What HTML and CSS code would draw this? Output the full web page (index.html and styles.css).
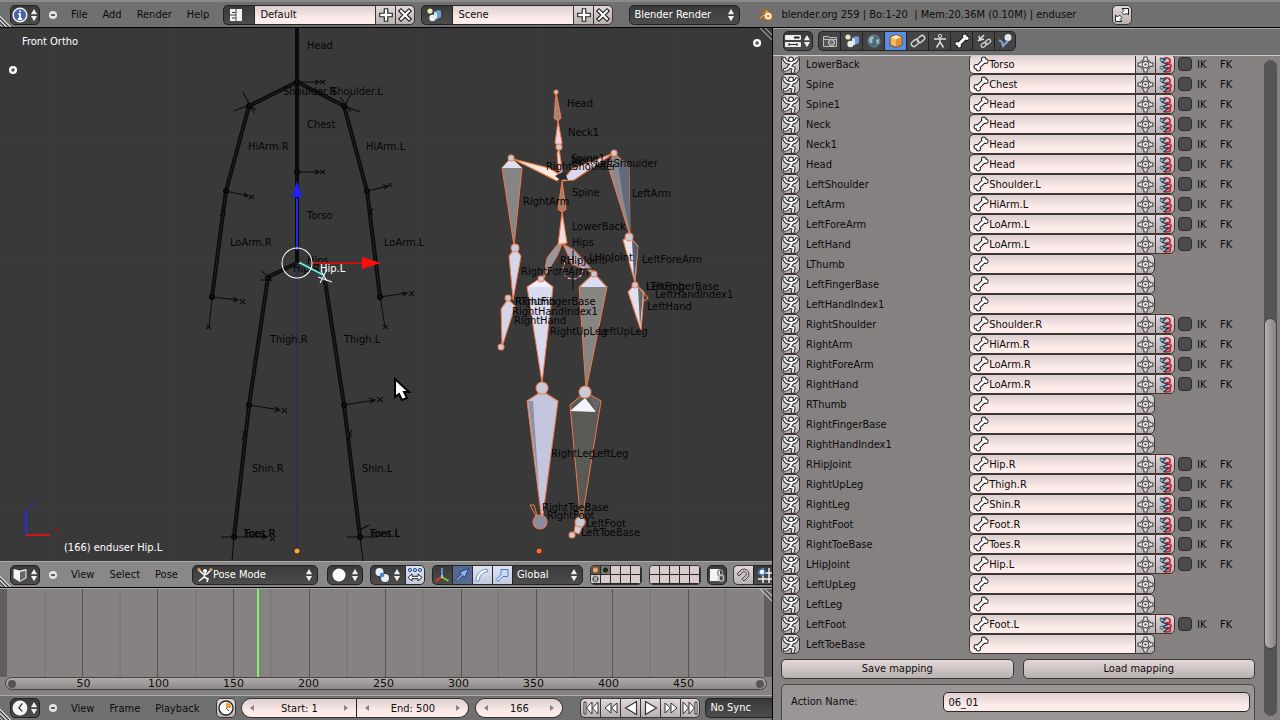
FILE: index.html
```html
<!DOCTYPE html>
<html lang="en">
    <head>
        <title>Blender</title>
        <meta charset="utf-8">
        <meta name="viewport" content="width=device-width, initial-scale=1">
        <link rel="stylesheet" href="styles.css">
    </head>
    <body>
        <svg class="symbols" width="0" height="0" aria-hidden="true">
            <symbol id="i-updown" viewBox="0 0 8 16"><path d="M4 1l3.5 6h-7zM4 15l3.5-6h-7z" fill="#eee"/></symbol>
            <symbol id="i-minus" viewBox="0 0 10 10"><circle cx="5" cy="5" r="4" fill="#e4e4e4"/><path d="M3 5h4" stroke="#333" stroke-width="1.500"/></symbol>
            <symbol id="i-info" viewBox="1 1 14 14"><circle cx="8" cy="8" r="6" fill="#4a62a8" stroke="#eee" stroke-width="1.300"/><path d="M8 4v1.600M6.500 7.200H8v4M6.300 11.500h3.600" stroke="#fff" stroke-width="1.600" fill="none"/></symbol>
            <symbol id="i-layout" viewBox="0 0 16 16"><path d="M2 2h5.500v5.500H2zM2 8.500h5.500V14H2zM8.500 2H14v12H8.500z" fill="#f4f4f4"/><path d="M4 5.500h3.500M4 11h3.500" stroke="#333"/></symbol>
            <symbol id="i-scene" viewBox="0 0 16 16"><circle cx="4" cy="4" r="2.600" fill="#e6ecb0"/><path d="M8 5l4-2 3 1v6l-4 2-3-1z" fill="#6f9bd6"/><path d="M8 5l3 1v6l-3-1z" fill="#d4e4fa"/><circle cx="6.500" cy="11" r="3.200" fill="#e8eeee"/></symbol>
            <symbol id="i-plus" viewBox="1 1 14 14"><path d="M6.500 2.500h3v4h4v3h-4v4h-3v-4h-4v-3h4z" fill="#fff" stroke="#222"/></symbol>
            <symbol id="i-cross" viewBox="1 1 14 14"><path d="M2.500 4.500l2-2L8 6l3.500-3.500 2 2L10 8l3.500 3.500-2 2L8 10l-3.500 3.500-2-2L6 8z" fill="#fff" stroke="#222"/></symbol>
            <symbol id="i-logo" viewBox="0 0 16 16"><path d="M1 11l6-5H2l1-1.500h5L6 3l2-.7 5 4c3 2.500 2 7-2.500 7.200-4 .2-5-2.300-4.700-4L2.500 12z" fill="#f0a04a" stroke="#7a4a20" stroke-width=".6"/><circle cx="10.200" cy="9" r="3" fill="#fff"/><circle cx="10.300" cy="9" r="1.600" fill="#c98a50"/></symbol>
            <symbol id="i-full" viewBox="0 0 16 16"><path d="M8 1.500h6.500V8l-2-2-2 2L8 5.500l2-2zM1.500 8l2 2 2-2L8 10.500l-2 2 2 2H1.500z" fill="#fff" stroke="#222"/></symbol>
            <symbol id="i-props" viewBox="0 0 16 16"><rect x="0" y="2" width="16" height="5" rx="1" fill="#eee"/><path d="M9 3.500h5.500v2H9z" fill="#222"/><rect x="0" y="9" width="16" height="5" rx="1" fill="#eee"/><path d="M4 11.500h8M4 10v3M12 10v3" stroke="#222"/></symbol>
            <symbol id="i-camera" viewBox="0 0 16 16"><path d="M1.500 3.500h5l1 1h7v9h-13z" fill="#555" stroke="#bbb"/><circle cx="9.500" cy="9.500" r="3" fill="#777" stroke="#ddd"/><path d="M2 6.500h12" stroke="#bbb"/></symbol>
            <symbol id="i-world" viewBox="0 0 16 16"><circle cx="8" cy="8" r="6" fill="#4c6b80" stroke="#6d8494"/><path d="M4 4c3-2 5 0 3 2s1 2-1 4-3-2-3-4zM10 7l3-1v3l-2 3z" fill="#9dbbb4"/></symbol>
            <symbol id="i-cube" viewBox="0 0 16 16"><path d="M8 1.500l6 2.500v8l-6 2.500L2 12V4z" fill="#f3b562" stroke="#6b4313"/><path d="M2.500 4.200L8 6.500l5.500-2.300L8 2z" fill="#ffe3b3"/><path d="M8 6.500V14l5.500-2.300V4.300z" fill="#d98f35"/></symbol>
            <symbol id="i-link" viewBox="0 0 16 16"><rect x="1" y="7.500" width="8" height="5" rx="2.500" transform="rotate(-40 5 10)" fill="none" stroke="#ccc" stroke-width="1.500"/><rect x="7" y="3.500" width="8" height="5" rx="2.500" transform="rotate(-40 11 6)" fill="none" stroke="#ccc" stroke-width="1.500"/></symbol>
            <symbol id="i-arm" viewBox="0 0 16 16"><circle cx="8" cy="3" r="1.700" fill="none" stroke="#ddd"/><path d="M2 6h12M8 6v4M8 9l-3.500 5.500M8 9l3.500 5.500" stroke="#ddd" stroke-width="1.400" fill="none"/></symbol>
            <symbol id="i-bone" viewBox="0 0 16 16">
                <g fill="#222" stroke="#222" stroke-width="5"><path d="M4.500 11.500l7-7"/><g stroke-width="2"><circle cx="3.200" cy="10.700" r="1.700"/><circle cx="5.300" cy="12.800" r="1.700"/><circle cx="10.700" cy="3.200" r="1.700"/><circle cx="12.800" cy="5.300" r="1.700"/></g></g>
                <g class="bone-fill"><path d="M4 12l8-8"/><circle cx="3.200" cy="10.700" r="1.700"/><circle cx="5.300" cy="12.800" r="1.700"/><circle cx="10.700" cy="3.200" r="1.700"/><circle cx="12.800" cy="5.300" r="1.700"/></g>
            </symbol>
            <symbol id="i-bonelink" viewBox="0 0 16 16"><path d="M3 3l1 4 4-1M2 8l6-6" stroke="#ddd" stroke-width="1.500" fill="none"/><rect x="5" y="10" width="6" height="3.500" rx="1.700" transform="rotate(-40 8 12)" fill="none" stroke="#ccc" stroke-width="1.300"/><rect x="9" y="7" width="6" height="3.500" rx="1.700" transform="rotate(-40 12 9)" fill="none" stroke="#ccc" stroke-width="1.300"/></symbol>
            <symbol id="i-phys" viewBox="0 0 16 16"><circle cx="11" cy="4.500" r="3.500" fill="#dfe6ee"/><path d="M2 7l3 2 1 4 5-5" stroke="#86a8d8" stroke-width="2" fill="none"/></symbol>
            <symbol id="i-pose" viewBox="0 0 16 16">
                <path d="M2 2.500c1 3 3 4 6 4s5-1 6-3.500M9.500 7L7 10l4 1.500-1 3.500M7 9.500c-1 2.500-2.500 3.500-4.500 3.500" fill="none" stroke="#222" stroke-width="3.600" stroke-linecap="round" stroke-linejoin="round"/>
                <circle cx="8.500" cy="3.200" r="2.200" fill="#fff" stroke="#222"/>
                <path d="M2 2.500c1 3 3 4 6 4s5-1 6-3.500M9.500 7L7 10l4 1.500-1 3.500M7 9.500c-1 2.500-2.500 3.500-4.500 3.500" fill="none" stroke="#fff" stroke-width="1.700" stroke-linecap="round" stroke-linejoin="round"/>
            </symbol>
            <symbol id="i-posemode" viewBox="0 0 16 16"><circle cx="8" cy="4" r="2" fill="#fff"/><path d="M2 3l4 4h4l4-4M8 7l-1 3 4 2-1 3M7 10l-5 4" fill="none" stroke="#fff" stroke-width="1.600"/><circle cx="2" cy="2.500" r="1.600" fill="#f39a3c"/><circle cx="14" cy="2.500" r="1.600" fill="#f39a3c"/></symbol>
            <symbol id="i-target" viewBox="0 0 16 16"><path d="M6.500 1h3v2l3.500 3.500h2v3h-2L9.500 13v2h-3v-2L3 9.500H1v-3h2L6.500 3z" fill="#fff" stroke="#444"/><circle cx="8" cy="8" r="3.200" fill="#e6e2e2" stroke="#444"/><circle cx="8" cy="8" r="1" fill="#333"/></symbol>
            <symbol id="i-twist" viewBox="0 0 16 16"><path d="M7 1.500c5 0 6 2 5 4.500L8 6.500M8 7c5 0 6 1.500 4.500 4L9 11M9 11.500c4 0 4 1.500 3 3L7 15" fill="none" stroke="#c22a3c" stroke-width="1.800"/><path d="M3 2l5 1-3 3 5 2-5 2 5 2-4 3" fill="none" stroke="#20344e" stroke-width="1.200"/><circle cx="4.500" cy="4" r="1.600" fill="#8fc4e0" stroke="#20344e" stroke-width=".6"/><circle cx="4.500" cy="11" r="1.600" fill="#8fc4e0" stroke="#20344e" stroke-width=".6"/></symbol>
            <symbol id="i-view3d" viewBox="0 0 16 16"><path d="M8 3.500L14.500 2v9L8 15l-6.500-4V2z" fill="#f4f4f4"/><path d="M8 5l5.500-1.500v7L8 14z" fill="#666"/></symbol>
            <symbol id="i-ball" viewBox="0 0 16 16"><circle cx="8" cy="8" r="6.500" fill="#fff"/></symbol>
            <symbol id="i-pivot" viewBox="0 0 16 16"><circle cx="5.500" cy="5" r="4" fill="#e8f0fa"/><circle cx="11" cy="11" r="4" fill="#e8f0fa"/><circle cx="8" cy="8" r="2.300" fill="#3f86d8"/></symbol>
            <symbol id="i-centers" viewBox="0 0 16 16"><g fill="#bcd4f4" stroke="#234a86"><circle cx="3" cy="3" r="1.600"/><circle cx="8" cy="3" r="1.600"/><circle cx="13" cy="3" r="1.600"/></g><path d="M1 10.500l4-3.500v2.300h6V7l4 3.500-4 3.500v-2.300H5V14z" fill="#fff" stroke="#222"/></symbol>
            <symbol id="i-axis" viewBox="0 0 16 16"><path d="M8 1v9" stroke="#5b8de8" stroke-width="2"/><path d="M8 10l-6.500 4" stroke="#e23b2c" stroke-width="2"/><path d="M8 10l6.500 4" stroke="#77cc33" stroke-width="2"/><path d="M8 8v3" stroke="#fff"/></symbol>
            <symbol id="i-move" viewBox="0 0 16 16"><path d="M1.500 13l6-6-2-2 9-3.500L11 10.500l-2-2-6 6z" fill="#8fb4ee" stroke="#1d3c7a"/></symbol>
            <symbol id="i-rot" viewBox="0 0 16 16"><path d="M2 14C2 7 6 3 13 2l1 2.500C8 5.500 5.500 8.500 5 14z" fill="#fff" stroke="#6a92d0"/></symbol>
            <symbol id="i-scl" viewBox="0 0 16 16"><path d="M2 12.500L7 7.500V2.500h7v7H9l-5 5z" fill="#c8dcf8" stroke="#4c7cc4"/></symbol>
            <symbol id="i-lock" viewBox="0 0 16 16"><path d="M1 2h10v12H1z" fill="#f3f3f3"/><rect x="9" y="3" width="4.500" height="6" rx="2" fill="none" stroke="#888" stroke-width="1.500"/><rect x="10" y="8" width="4.500" height="6" rx="2" fill="none" stroke="#bbb" stroke-width="1.500"/></symbol>
            <symbol id="i-magnet" viewBox="0 0 16 16"><path d="M2 7l4-4c5-3 10 2 7 7l-4 4-2-2 4-4c1-2-1-4-3-3L4 9z" fill="#c4bebe" stroke="#444"/></symbol>
            <symbol id="i-snap" viewBox="0 0 16 16"><path d="M6 1v15M12 1v15M1 6h15M1 12h15" stroke="#eee" stroke-width="1.500"/><circle cx="5" cy="5" r="3" fill="#fff" stroke="#3f76c8" stroke-width="1.500"/></symbol>
            <symbol id="i-clock" viewBox="1 1 14 14"><circle cx="8" cy="8" r="6.500" fill="#f4f4f4"/><path d="M10 4L7 8l3 3" stroke="#222" fill="none"/></symbol>
            <symbol id="i-range" viewBox="0 0 16 16"><circle cx="8" cy="8" r="7" fill="#fff" stroke="#222" stroke-width="1.300"/><path d="M8 8V2.500A5.500 5.500 0 0 1 13.500 8z" fill="#e9a23b"/><path d="M8 8l3 3" stroke="#444"/></symbol>
            <symbol id="i-first" viewBox="0 0 16 16"><path d="M1 2h2v12H1zM9 2v12L3.500 8zM15 2v12L9.500 8z" fill="#fff" stroke="#333"/></symbol>
            <symbol id="i-prev" viewBox="0 0 16 16"><path d="M8 3v10L2 8zM14 3v10L8.500 8z" fill="#fff" stroke="#333"/></symbol>
            <symbol id="i-back" viewBox="0 0 16 16"><path d="M13.500 1.500v13L2.500 8z" fill="#fff" stroke="#333" stroke-width="1.200"/></symbol>
            <symbol id="i-play" viewBox="0 0 16 16"><path d="M2.500 1.500v13l11-6.500z" fill="#fff" stroke="#333" stroke-width="1.200"/></symbol>
            <symbol id="i-next" viewBox="0 0 16 16"><path d="M2 3v10l5.500-5zM8 3v10l6-5z" fill="#fff" stroke="#333"/></symbol>
            <symbol id="i-last" viewBox="0 0 16 16"><path d="M13 2h2v12h-2zM7 2v12l5.500-6zM1 2v12l5.500-6z" fill="#fff" stroke="#333"/></symbol>
            <symbol id="i-left" viewBox="0 0 6 8"><path d="M5 1v6L1 4z" fill="#8d8080"/></symbol>
            <symbol id="i-right" viewBox="0 0 6 8"><path d="M1 1v6l4-3z" fill="#8d8080"/></symbol>
        </svg>

        <header class="bar top-bar">
            <button class="dark editor" aria-label="Info"><svg><use href="#i-info"/></svg><svg class="ud"><use href="#i-updown"/></svg></button>
            <button class="collapse" aria-label="Collapse menus"><svg><use href="#i-minus"/></svg></button>
            <nav class="menus top-menus"><a href="#">File</a><a href="#">Add</a><a href="#">Render</a><a href="#">Help</a></nav>
            <div class="datablock">
                <button class="dark" aria-label="Screen"><svg><use href="#i-layout"/></svg></button>
                <input type="text" value="Default" aria-label="Screen name">
                <button class="light" aria-label="Add screen"><svg><use href="#i-plus"/></svg></button>
                <button class="light" aria-label="Delete screen"><svg><use href="#i-cross"/></svg></button>
            </div>
            <div class="datablock">
                <button class="dark" aria-label="Scene"><svg><use href="#i-scene"/></svg></button>
                <input type="text" value="Scene" aria-label="Scene name">
                <button class="light" aria-label="Add scene"><svg><use href="#i-plus"/></svg></button>
                <button class="light" aria-label="Delete scene"><svg><use href="#i-cross"/></svg></button>
            </div>
            <div class="dark menu engine"><select aria-label="Render engine"><option>Blender Render</option></select><svg class="ud"><use href="#i-updown"/></svg></div>
            <div class="stats"><svg><use href="#i-logo"/></svg><span>blender.org 259 | Bo:1-20  | Mem:20.36M (0.10M) | enduser</span></div>
            <button class="light full" aria-label="Full screen"><svg><use href="#i-full"/></svg></button>
        </header>

        <main class="workspace">
            <section class="left">
                <svg class="viewport" viewBox="0 28 772 533" preserveAspectRatio="xMinYMin slice">
                    <g stroke="#3d3d3d"><path d="M53 28v533M175 28v533M420 28v533M542 28v533M675 28v533M0 140h772M0 262h772M0 384h772M0 506h772"/></g>
                    <path d="M297 262v290" stroke="#2f2c62" stroke-width="2"/>

                    <!-- enduser rig -->
                    <g id="rig" stroke="#0b0b0b" stroke-width="4" fill="none" stroke-linejoin="round">
                        <path d="M297 28v235"/>
                        <path d="M212 297l14-106 23-85 48-24 47 24 23 85 13 106"/>
                        <path d="M234 537l15-132 19-128 29-14"/>
                        <path d="M325 281l19 124 16 132"/>
                    </g>
                    <path d="M212 297l14-106 23-85 48-24 47 24 23 85 13 106M234 537l15-132 19-128 29-14M325 281l19 124 16 132" stroke="#222" fill="none"/>
                    <g stroke="#0a0a0a" fill="none">
                        <path d="M212 297l-3 30M380 297l5 30M234 537l-2 24M360 537l3 24"/>
                        <path d="M297 82h22m-4-2l4 2-4 2M320 80l5 4m0-4l-5 4"/>
                        <path d="M297 172h22m-4-2l4 2-4 2M320 170l5 4m0-4l-5 4"/>
                        <path d="M234 111l15-6m-6-13l11 21m-5-9l7 6M344 106l16 6m-16-5l7-13m-11 3l11 15"/>
                        <path d="M226 191l22 5m-4-3l4 3-4 1M249 195l5 4m0-4l-5 4"/>
                        <path d="M367 191l21-5m-5-1l5 1-4 3M388 183l4 4m0-4l-4 4"/>
                        <path d="M212 297l26 3m-5-3l5 3-5 2M240 299l5 5m0-5l-5 5"/>
                        <path d="M380 297l27-4m-5-1l5 1-4 3M409 291l5 5m0-5l-5 5"/>
                        <path d="M249 405l31 5m-5-3l5 3-6 2M282 408l5 5m0-5l-5 5"/>
                        <path d="M344 405l31-5m-6-2l6 2-5 3M377 397l6 5m0-5l-6 5"/>
                        <path d="M221 537h46m-5-3l5 3-5 2M270 536l5 5m0-5l-5 5M347 537h30M360 530l9-5M262 271l10 10m-12-1h12"/>
                        <path d="M206 325l5 4m0-4l-5 4M383 325l5 4m0-4l-5 4M221 209l5 6m-1-7l-5 8M368 209l5 6m0-7l-4 8M242 431l5 6m-1-7l-4 10M347 431l5 6m0-7l-4 10"/>
                    </g>
                    <g fill="#1c1c1c" stroke="#070707" stroke-width="2">
                        <circle cx="297" cy="82" r="2"/><circle cx="297" cy="172" r="2"/><circle cx="249" cy="106" r="2"/><circle cx="344" cy="106" r="2"/>
                        <circle cx="226" cy="191" r="2"/><circle cx="367" cy="191" r="2"/><circle cx="212" cy="297" r="2"/><circle cx="380" cy="297" r="2"/>
                        <circle cx="249" cy="405" r="2"/><circle cx="344" cy="405" r="2"/><circle cx="234" cy="537" r="2"/><circle cx="360" cy="537" r="2"/><circle cx="268" cy="278" r="2"/>
                    </g>
                    <g class="bone-label">
                        <text x="307" y="49">Head</text><text x="283" y="95">Shoulder.R</text><text x="331" y="95">Shoulder.L</text>
                        <text x="307" y="128">Chest</text><text x="248" y="150">HiArm.R</text><text x="366" y="150">HiArm.L</text>
                        <text x="307" y="219">Torso</text><text x="230" y="246">LoArm.R</text><text x="384" y="246">LoArm.L</text>
                        <text x="307" y="264">Hips</text><text x="293" y="272">Hip.R</text>
                        <text x="270" y="343">Thigh.R</text><text x="344" y="343">Thigh.L</text><text x="252" y="472">Shin.R</text><text x="362" y="472">Shin.L</text>
                        <text x="244" y="537">Toes.R</text><text x="244" y="537">Foot.R</text><text x="370" y="537">Toes.L</text><text x="370" y="537">Foot.L</text>
                    </g>

                    <!-- transform manipulator -->
                    <path d="M297 198v52" stroke="#2a2adf" stroke-width="2"/><path d="M292 197l5-16 5 16z" fill="#2020ff"/>
                    <path d="M312 263h52" stroke="#c01010" stroke-width="2"/><path d="M362 257l19 6-19 6z" fill="#fb0d0d"/>
                    <path d="M299 263l25 13" stroke="#6ff0ea" stroke-width="3"/><path d="M299 264l25 13" stroke="#222"/>
                    <path d="M318 277l14 5M320 283l7-14M321 271l6 10" stroke="#e8ffff"/>
                    <circle cx="297" cy="263" r="15" fill="none" stroke="#fff"/>
                    <text class="bone-label picked" x="320" y="272">Hip.L</text>
                    <circle cx="297" cy="551" r="3" fill="#f7a34a" stroke="#4b2b10"/>

                    <!-- captured armature -->
                    <g stroke="#f07848" stroke-linejoin="round">
                        <path d="M556 92l5 26-3 3-4-3z" fill="#a58377"/>
                        <path d="M558 121l4 22-3 4-4-4z" fill="#e9d6da"/>
                        <path d="M559 148l4 29-4-3-2-20z" fill="#e9d6da"/>
                        <path d="M513 159l36 9 13 8-5 5z" fill="#fbe9dc"/>
                        <path d="M614 153l-42 16-10 12 12-1z" fill="#dcd8ee"/>
                        <path d="M555 176l9-5 4 9-9-1z" fill="#2c2c30" stroke="none"/>
                        <path d="M562 181l4 28-4 3-4-3z" fill="#a67a6b"/>
                        <path d="M562 212l5 31-9 2z" fill="#f0dcda"/>
                        <path d="M511 158l11 10-8 78-12-78z" fill="#858585"/><path d="M511 158l11 10h-20z" fill="#dedff0" stroke="none"/>
                        <path d="M614 153l15 13 1 70-22-70z" fill="#8b8b8f"/><path d="M617 158l12 8 1 66-7-34z" fill="#626a7d" stroke="none"/>
                        <path d="M515 248l6 8-8 44-4-44z" fill="#d5d5e9"/>
                        <path d="M508 299l7 7-13 41-1-38z" fill="#d5d5e9"/>
                        <path d="M629 236l9 10-3 37-12-43z" fill="#e8e3ec"/><path d="M632 240l6 7-4 34z" fill="#555f74" stroke="none"/>
                        <path d="M635 284l9 8-3 39-13-39z" fill="#e0e0ef"/><path d="M638 287l5 6-3 34z" fill="#666" stroke="none"/>
                        <path d="M642 290l6 8-4 3" fill="none"/>
                        <path d="M562 244l-5 12-14 23 4-21 10-13z" fill="#8d99a7"/><path d="M563 244l11 6 22 24-24-10z" fill="#a3a6b8"/>
                        <path d="M541 278l12 9-11 96-15-96z" fill="#d9dbf1"/><path d="M541 278l11 9h-24z" fill="#efefff" stroke="none"/>
                        <path d="M594 273l13 14-21 103-7-103z" fill="#878581"/><path d="M594 274l12 13h-26z" fill="#dcdcf4" stroke="none"/>
                        <path d="M542 391l16 10-16 121-15-121z" fill="#c4c6dd"/><path d="M528 401l5 0 6 90z" fill="#8f93a4" stroke="none"/>
                        <path d="M585 392l16 9-20 124-11-120z" fill="#5a5a55"/><path d="M585 398l-15 13 26 1z" fill="#f4f4ff" stroke="none"/><path d="M590 397l10 4-4 12z" fill="#65656f" stroke="none"/>
                        <path d="M530 505l4 0 4 14M530 505l8 15" fill="none"/>
                        <path d="M576 521l9 0-6 13-5-2z" fill="#cfcfe4"/>
                    </g>
                    <g stroke="#f08050" fill="#c9cbdd">
                        <circle cx="556" cy="92" r="2"/><circle cx="559" cy="147" r="3"/><circle cx="511" cy="158" r="3"/><circle cx="614" cy="153" r="3"/><circle cx="515" cy="248" r="4"/>
                        <circle cx="629" cy="237" r="4"/><circle cx="635" cy="285" r="3"/><circle cx="508" cy="298" r="3"/><circle cx="501" cy="347" r="3"/><circle cx="541" cy="279" r="3"/>
                        <circle cx="594" cy="274" r="3"/><circle cx="542" cy="388" r="6"/><circle cx="585" cy="392" r="6"/><circle cx="540" cy="522" r="7" fill="#8b8b9e"/>
                        <circle cx="580" cy="522" r="5"/><circle cx="572" cy="535" r="3"/>
                    </g>
                    <circle cx="573" cy="269" r="10" fill="none" stroke="#fff" stroke-dasharray="3 3"/><circle cx="573" cy="269" r="10" fill="none" stroke="#c33" stroke-dasharray="3 3" stroke-dashoffset="3"/>
                    <path d="M573 250v14M573 274v16M556 269h12M579 269h14" stroke="#111"/>
                    <circle cx="539" cy="551" r="3" fill="#f0703a" stroke="#5b2712"/>
                    <g class="bone-label">
                        <text x="567" y="107">Head</text><text x="568" y="136">Neck1</text><text x="571" y="162">Spine1</text><text x="571" y="164">Neck</text>
                        <text x="546" y="170">RightShoulder</text><text x="595" y="167">LeftShoulder</text><text x="572" y="196">Spine</text>
                        <text x="523" y="205">RightArm</text><text x="632" y="197">LeftArm</text><text x="572" y="230">LowerBack</text><text x="572" y="246">Hips</text>
                        <text x="560" y="264">RHipJoint</text><text x="589" y="261">LHipJoint</text><text x="521" y="275">RightForeArm</text><text x="642" y="263">LeftForeArm</text>
                        <text x="646" y="290">LeftFingerBase</text><text x="646" y="290">LThumb</text><text x="655" y="298">LeftHandIndex1</text><text x="647" y="310">LeftHand</text>
                        <text x="515" y="305">RightFingerBase</text><text x="515" y="305">RThumb</text><text x="512" y="315">RightHandIndex1</text><text x="514" y="324">RightHand</text>
                        <text x="550" y="335">RightUpLeg</text><text x="598" y="335">LeftUpLeg</text><text x="551" y="457">RightLeg</text><text x="592" y="457">LeftLeg</text>
                        <text x="542" y="511">RightToeBase</text><text x="547" y="519">RightFoot</text><text x="586" y="527">LeftFoot</text><text x="581" y="536">LeftToeBase</text>
                    </g>

                    <g fill="#fff"><circle cx="13" cy="70" r="4"/><circle cx="757" cy="43" r="4"/></g>
                    <path d="M11 70h4M13 68v4M755 43h4M757 41v4" stroke="#222"/>
                    <path d="M26 510v24" stroke="#3030b0" stroke-width="3"/><path d="M26 535h24" stroke="#d01616" stroke-width="2"/>
                    <path d="M29 502h4l-4 5h4" fill="none" stroke="#30308a"/><path d="M54 528l4 4m0-4l-4 4" stroke="#a01818"/>
                    <text class="view-text" x="22" y="45">Front Ortho</text>
                    <text class="view-text" x="64" y="551">(166) enduser Hip.L</text>
                    <path d="M760 28l12 12M765 28l7 7" stroke="#aaa"/>
                    <path d="M395 379v18l4-3 3 6 5-2-3-6h5z" fill="#fff" stroke="#000" stroke-width="2"/>
                </svg>

                <div class="bar view-bar">
                    <button class="dark editor" aria-label="3D View"><svg><use href="#i-view3d"/></svg><svg class="ud"><use href="#i-updown"/></svg></button>
                    <button class="collapse" aria-label="Collapse menus"><svg><use href="#i-minus"/></svg></button>
                    <nav class="menus"><a href="#">View</a><a href="#">Select</a><a href="#">Pose</a></nav>
                    <div class="dark menu mode"><svg><use href="#i-posemode"/></svg><select aria-label="Mode"><option>Pose Mode</option></select><svg class="ud"><use href="#i-updown"/></svg></div>
                    <button class="dark shading" aria-label="Viewport shading"><svg><use href="#i-ball"/></svg><svg class="ud"><use href="#i-updown"/></svg></button>
                    <div class="group">
                        <button class="dark pivot" aria-label="Pivot point"><svg><use href="#i-pivot"/></svg><svg class="ud"><use href="#i-updown"/></svg></button>
                        <button class="blue" aria-label="Centers only"><svg><use href="#i-centers"/></svg></button>
                    </div>
                    <div class="group">
                        <button class="dark tool" aria-label="Manipulator"><svg><use href="#i-axis"/></svg></button>
                        <button class="dark tool on" aria-label="Translate"><svg><use href="#i-move"/></svg></button>
                        <button class="blue" aria-label="Rotate"><svg><use href="#i-rot"/></svg></button>
                        <button class="blue" aria-label="Scale"><svg><use href="#i-scl"/></svg></button>
                        <div class="dark menu orient"><select aria-label="Orientation"><option>Global</option></select><svg class="ud"><use href="#i-updown"/></svg></div>
                    </div>
                    <div class="layers" id="layersA"></div>
                    <div class="layers" id="layersB"></div>
                    <button class="dark tool lock" aria-label="Lock camera and layers"><svg><use href="#i-lock"/></svg></button>
                    <div class="group">
                        <button class="light" aria-label="Snap"><svg><use href="#i-magnet"/></svg></button>
                        <button class="dark snap" aria-label="Snap element"><svg><use href="#i-snap"/></svg></button>
                    </div>
                </div>

                <div class="timeline">
                    <svg class="frames" viewBox="0 0 772 87" preserveAspectRatio="none">
                        <path d="M0 0h7v87H0zM764 0h8v87h-8z" fill="#5f5d5d"/>
                        <path d="M45 0v87M120 0v87M196 0v87M271 0v87M347 0v87M423 0v87M498 0v87M574 0v87M650 0v87M725 0v87" stroke="#777474"/>
                        <path d="M82.500 0v87M157.500 0v87M233.500 0v87M309.500 0v87M385.500 0v87M461.500 0v87M536.500 0v87M612.500 0v87M688.500 0v87" stroke="#555252"/>
                        <path d="M258 0v87" stroke="#86f06e" stroke-width="2"/>
                        <path d="M760 0l12 12M765 0l7 7" stroke="#ccc"/>
                    </svg>
                    <div class="ruler"><i></i><div id="ticks"></div><i></i></div>
                </div>

                <div class="bar time-bar">
                    <button class="dark editor" aria-label="Timeline"><svg><use href="#i-clock"/></svg><svg class="ud"><use href="#i-updown"/></svg></button>
                    <button class="collapse" aria-label="Collapse menus"><svg><use href="#i-minus"/></svg></button>
                    <nav class="menus"><a href="#">View</a><a href="#">Frame</a><a href="#">Playback</a></nav>
                    <button class="light range" aria-label="Preview range"><svg><use href="#i-range"/></svg></button>
                    <div class="numbers">
                        <div class="number start"><svg><use href="#i-left"/></svg><input type="text" value="Start: 1" aria-label="Start frame"><svg><use href="#i-right"/></svg></div>
                        <div class="number end"><svg><use href="#i-left"/></svg><input type="text" value="End: 500" aria-label="End frame"><svg><use href="#i-right"/></svg></div>
                    </div>
                    <div class="numbers">
                        <div class="number current"><svg><use href="#i-left"/></svg><input type="text" value="166" aria-label="Current frame"><svg><use href="#i-right"/></svg></div>
                    </div>
                    <div class="group player">
                        <button class="light" aria-label="First frame"><svg><use href="#i-first"/></svg></button>
                        <button class="light" aria-label="Previous keyframe"><svg><use href="#i-prev"/></svg></button>
                        <button class="light" aria-label="Play backwards"><svg><use href="#i-back"/></svg></button>
                        <button class="light" aria-label="Play"><svg><use href="#i-play"/></svg></button>
                        <button class="light" aria-label="Next keyframe"><svg><use href="#i-next"/></svg></button>
                        <button class="light" aria-label="Last frame"><svg><use href="#i-last"/></svg></button>
                    </div>
                    <div class="dark menu sync"><select aria-label="Sync mode"><option>No Sync</option></select></div>
                </div>
            </section>

            <section class="right">
                <div class="bar props-bar">
                    <button class="dark editor" aria-label="Properties"><svg><use href="#i-props"/></svg><svg class="ud"><use href="#i-updown"/></svg></button>
                    <div class="group tabs">
                        <button class="dark" aria-label="Render"><svg><use href="#i-camera"/></svg></button>
                        <button class="dark" aria-label="Scene"><svg><use href="#i-scene"/></svg></button>
                        <button class="dark" aria-label="World"><svg><use href="#i-world"/></svg></button>
                        <button class="dark active" aria-label="Object"><svg><use href="#i-cube"/></svg></button>
                        <button class="dark" aria-label="Constraints"><svg><use href="#i-link"/></svg></button>
                        <button class="dark" aria-label="Armature"><svg><use href="#i-arm"/></svg></button>
                        <button class="dark" aria-label="Bone"><svg><use href="#i-bone"/></svg></button>
                        <button class="dark" aria-label="Bone constraints"><svg><use href="#i-bonelink"/></svg></button>
                        <button class="dark" aria-label="Physics"><svg><use href="#i-phys"/></svg></button>
                    </div>
                </div>
                <div class="props">
                    <div class="panel">
                        <div id="mapping"></div>
                        <div class="actions">
                            <button class="light">Save mapping</button>
                            <button class="light">Load mapping</button>
                        </div>
                        <div class="box">
                            <label for="actionName">Action Name:</label>
                            <input type="text" id="actionName" value="06_01">
                        </div>
                    </div>
                    <div class="scroll"><div class="thumb"></div></div>
                </div>
            </section>
        </main>

        <script>
            // performer bone, enduser bone
            var bones = [
                ["LowerBack", "Torso"], ["Spine", "Chest"], ["Spine1", "Head"], ["Neck", "Head"],
                ["Neck1", "Head"], ["Head", "Head"], ["LeftShoulder", "Shoulder.L"], ["LeftArm", "HiArm.L"],
                ["LeftForeArm", "LoArm.L"], ["LeftHand", "LoArm.L"], ["LThumb", ""], ["LeftFingerBase", ""],
                ["LeftHandIndex1", ""], ["RightShoulder", "Shoulder.R"], ["RightArm", "HiArm.R"],
                ["RightForeArm", "LoArm.R"], ["RightHand", "LoArm.R"], ["RThumb", ""], ["RightFingerBase", ""],
                ["RightHandIndex1", ""], ["RHipJoint", "Hip.R"], ["RightUpLeg", "Thigh.R"], ["RightLeg", "Shin.R"],
                ["RightFoot", "Foot.R"], ["RightToeBase", "Toes.R"], ["LHipJoint", "Hip.L"], ["LeftUpLeg", ""],
                ["LeftLeg", ""], ["LeftFoot", "Foot.L"], ["LeftToeBase", ""]
            ];

            function icon(name) {
                return `<svg><use href="#i-${name}"/></svg>`;
            }

            var rows = "";
            for (var i = 0; i < bones.length; i++) {
                var mapped = bones[i][1] !== "";
                rows += `<div class="row">
                    <button class="light pose" aria-label="Select ${bones[i][0]}">${icon("pose")}</button>
                    <label for="bone${i}">${bones[i][0]}</label>
                    <div class="field">${icon("bone")}<input type="text" id="bone${i}" value="${bones[i][1]}"></div>
                    <div class="group">
                        <button class="light" aria-label="Pick bone">${icon("target")}</button>
                        ${mapped ? `<button class="light" aria-label="Twist fix">${icon("twist")}</button>` : ""}
                    </div>
                    ${mapped ? `<input type="checkbox" id="ik${i}"><label class="ik" for="ik${i}">IK</label><span>FK</span>` : ""}
                </div>`;
            }
            document.getElementById("mapping").innerHTML = rows;

            var ticks = "";
            for (var f = 50; f <= 450; f += 50) {
                ticks += `<span>${f}</span>`;
            }
            document.getElementById("ticks").innerHTML = ticks;

            ["layersA", "layersB"].forEach(function (id) {
                var cells = "";
                for (var n = 1; n <= 10; n++) {
                    cells += `<button aria-label="Layer ${n}"></button>`;
                }
                document.getElementById(id).innerHTML = cells;
            });
        </script>
    </body>
</html>
```

FILE: styles.css
```css
* {
    box-sizing: border-box;
}

body {
    margin: 0;
    height: 100vh;
    display: grid;
    grid-template-rows: 28px minmax(0, 1fr);
    overflow: hidden;
    background: #6f6e6e;
    color: #0c0c0c;
    font: 11px/14px "DejaVu Sans Condensed", "DejaVu Sans", sans-serif;
}

.symbols {
    position: absolute;
}

button, input, select {
    margin: 0;
    padding: 0;
    border: 1px solid #2a2727;
    border-radius: 0;
    font: inherit;
    color: inherit;
    outline: none;
}

button, .menu {
    display: flex;
    align-items: center;
    justify-content: center;
    flex: none;
    height: 20px;
    min-width: 20px;
}

svg {
    display: block;
    flex: none;
    width: 16px;
    height: 16px;
}

svg.ud {
    width: 8px;
    height: 14px;
}

a {
    color: inherit;
    text-decoration: none;
}

/* headers */
.bar {
    position: relative;
    display: flex;
    align-items: center;
    min-width: 0;
    overflow: hidden;
    padding-left: 10px;
    border-top: 1px solid #aaa;
    background: #717070;
}

/* corner grip */
.bar::before {
    content: "";
    position: absolute;
    left: 0;
    bottom: 0;
    width: 12px;
    height: 12px;
    clip-path: polygon(0 0, 100% 100%, 0 100%);
    background: repeating-linear-gradient(45deg, #333 0 1px, #ccc 1px 2px, #777 2px 3px);
}

.top-bar {
    border-top: 2px solid #8a8989;
    border-bottom: 1px solid #000;
}

.props-bar::before {
    display: none;
}

.dark {
    background: linear-gradient(#3a3a3a, #4c4c4c);
    border: 1px solid #222;
    border-radius: 5px;
    color: #fff;
}

.light {
    background: linear-gradient(#e2d8d8, #b9b0b0);
    border: 1px solid #3c3636;
    border-radius: 5px;
}

.blue {
    background: linear-gradient(#dfe4f2, #c3cbdf);
}

.editor {
    width: 30px;
    gap: 2px;
}

.collapse {
    width: 20px;
    margin: 0 3px;
    border: 0;
    background: none;
}

.collapse svg {
    width: 10px;
    height: 10px;
}

.menus {
    display: flex;
    gap: 15px;
    margin: 0 14px 0 5px;
    padding-top: 1px;
}

.menu {
    padding: 0 4px;
}

.menu select {
    flex: 1;
    min-width: 0;
    border: 0;
    appearance: none;
    background: transparent;
}

.group, .datablock, .numbers {
    display: flex;
    flex: none;
}

.group > *, .datablock > * {
    border-radius: 0;
    border-right-width: 0;
}

.group > :first-child, .datablock > :first-child {
    border-top-left-radius: 5px;
    border-bottom-left-radius: 5px;
}

.group > :last-child, .datablock > :last-child {
    border-right-width: 1px;
    border-top-right-radius: 5px;
    border-bottom-right-radius: 5px;
}

.datablock {
    margin-right: 6px;
}

.datablock .dark {
    width: 31px;
    padding-right: 6px;
}

.datablock input {
    width: 121px;
    padding-left: 5px;
}

input[type="text"] {
    height: 20px;
    background: linear-gradient(#dccfcf, #fdecea 70%);
}

.engine {
    width: 111px;
    margin: 0 18px 0 10px;
}

.stats {
    display: flex;
    align-items: center;
    white-space: pre;
}

.stats svg {
    margin-right: 7px;
}

.full {
    margin-left: 36px;
}

/* areas */
.workspace {
    display: grid;
    grid-template-columns: 61fr 40fr;
    min-height: 0;
}

.left {
    display: grid;
    grid-template-rows: minmax(0, 1fr) 27px 107px 25px;
    min-width: 0;
    min-height: 0;
    border-right: 1px solid #000;
}

.viewport {
    width: 100%;
    height: 100%;
    background: #393939;
}

.bone-label {
    fill: #050505;
}

.picked, .view-text {
    fill: #fff;
}

.view-bar {
    background: #8a8787;
    border-bottom: 1px solid #000;
}

.mode {
    width: 126px;
}

.shading {
    width: 36px;
    margin: 0 7px 0 9px;
    gap: 4px;
}

.pivot {
    width: 35px;
    gap: 3px;
}

.pivot + .blue {
    margin-right: 7px;
}

.tool.on {
    background: #56698f;
}

.orient {
    width: 71px;
}

.layers {
    display: grid;
    grid-template-columns: repeat(5, 10px);
    flex: none;
    margin-left: 7px;
    border: 1px solid #333;
    border-radius: 4px;
    overflow: hidden;
}

.layers button {
    width: 10px;
    min-width: 0;
    height: 9px;
    border-width: 0 1px 1px 0;
    background: #d9cccc;
}

#layersA button:nth-child(1) {
    background: radial-gradient(circle, #f6a550 2px, #5a5656 3px);
}

#layersA button:nth-child(2) {
    background: radial-gradient(circle, #222 2px, #777 3px);
}

#layersA button:nth-child(6) {
    background: radial-gradient(circle, #aaa 2px, #444 2px, #d9cccc 4px);
}

.lock {
    margin: 0 6px;
}

.snap {
    width: 40px;
    justify-content: flex-start;
    padding-left: 3px;
}

.timeline {
    display: grid;
    grid-template-rows: minmax(0, 1fr) 13px;
    padding-bottom: 5px;
    border-top: 1px solid #aaa;
    background: #858281;
}

.frames {
    width: 100%;
    height: 100%;
}

.ruler {
    display: flex;
    align-items: center;
    margin: 0 5px;
    padding: 0 2px;
    border: 1px solid #444;
    border-radius: 7px;
    background: linear-gradient(#b3abab, #8d8888);
    font-family: "DejaVu Sans", sans-serif;
}

.ruler i {
    width: 8px;
    height: 8px;
    border-radius: 50%;
    background: #555;
}

#ticks {
    display: grid;
    grid-template-columns: repeat(9, 1fr);
    flex: 1;
    margin: 0 35px 0 30px;
    line-height: 11px;
    text-align: center;
}

.range {
    margin-right: 5px;
}

.time-bar .menus {
    margin-right: 17px;
}

.numbers {
    margin-right: 6px;
    border: 1px solid #333;
    border-radius: 10px;
    overflow: hidden;
}

.number {
    display: flex;
    align-items: center;
    padding: 0 7px;
    background: linear-gradient(#dccfcf, #fdecea 70%);
}

.number svg {
    width: 6px;
    height: 8px;
}

.number input[type="text"] {
    flex: 1;
    min-width: 0;
    height: 18px;
    border: 0;
    background: transparent;
    text-align: center;
}

.start {
    width: 115px;
    border-right: 1px solid #222;
}

.end {
    width: 111px;
}

.current {
    width: 86px;
}

.player {
    margin: 0 5px 0 11px;
}

.sync {
    flex: 1 0 60px;
    border-right: 0;
    border-radius: 5px 0 0 5px;
}

/* properties */
.right {
    display: grid;
    grid-template-rows: 28px minmax(0, 1fr);
    min-width: 0;
    min-height: 0;
}

.props-bar {
    padding-bottom: 2px;
    border-bottom: 1px solid #ccc;
}

.props-bar .editor {
    margin-right: 5px;
}

.tabs button {
    width: 22px;
    background: #444;
}

.tabs .active {
    background: #5a8fe0;
}

.bone-fill {
    fill: #fff;
    stroke: #fff;
}

.bone-fill path {
    stroke-width: 3px;
}

.bone-fill circle {
    stroke: none;
}

.props {
    display: grid;
    grid-template-columns: minmax(0, 1fr) 13px;
    gap: 9px;
    padding: 0 3px 4px 8px;
    min-height: 0;
    overflow: hidden;
    background: #848180;
}

.panel {
    min-width: 0;
    min-height: 0;
}

#mapping {
    margin-top: -2px;
}

.row {
    display: flex;
    align-items: center;
    height: 20px;
}

.row > label, .row > span {
    padding-top: 1px;
}

.row > label {
    flex: 1;
    padding-left: 6px;
}

.row .pose {
    width: 19px;
    min-width: 19px;
}

.row .pose svg, .row .group svg {
    width: 17px;
    height: 17px;
}

.field {
    display: flex;
    align-items: center;
    width: 35%;
    height: 20px;
    padding-left: 3px;
    border: 1px solid #3c3636;
    border-right: 0;
    border-radius: 5px 0 0 5px;
    background: linear-gradient(#dccfcf, #fdecea 70%);
}

.row .field input {
    flex: 1;
    min-width: 0;
    height: 18px;
    border: 0;
    background: transparent;
}

.row .group {
    width: 40px;
}

.row .group button {
    border-radius: 0;
}

.row .group button:last-child {
    border-radius: 0 5px 5px 0;
}

.row input[type="checkbox"] {
    width: 14px;
    height: 14px;
    margin-left: 3px;
    appearance: none;
    border: 1px solid #2e2e2e;
    border-radius: 4px;
    background: #4c4b4b;
}

.row .ik {
    flex: none;
    width: 28px;
    padding-left: 5px;
}

.row span {
    width: 35px;
}

/* rows without a target keep the IK/FK space free */
.row .group:last-child {
    margin-right: 80px;
}

.actions {
    display: grid;
    grid-template-columns: 1fr 1fr;
    gap: 9px;
    margin-top: 5px;
}

.box {
    display: flex;
    align-items: center;
    height: 60px;
    margin-top: 5px;
    padding: 0 4px 24px 9px;
    border: 1px solid #4a4747;
    border-radius: 5px;
    background: #9a9696;
}

.box label {
    flex: 1;
}

.box input[type="text"] {
    width: 67%;
    padding-left: 5px;
    border-radius: 5px;
}

.scroll {
    display: grid;
    grid-template-rows: 258fr 330fr 67fr;
    margin-top: 4px;
    border-radius: 7px;
    background: #555;
}

.thumb {
    grid-row: 2;
    border: 1px solid #444;
    border-radius: 7px;
    background: linear-gradient(90deg, #b5afaf, #868282);
}
```
